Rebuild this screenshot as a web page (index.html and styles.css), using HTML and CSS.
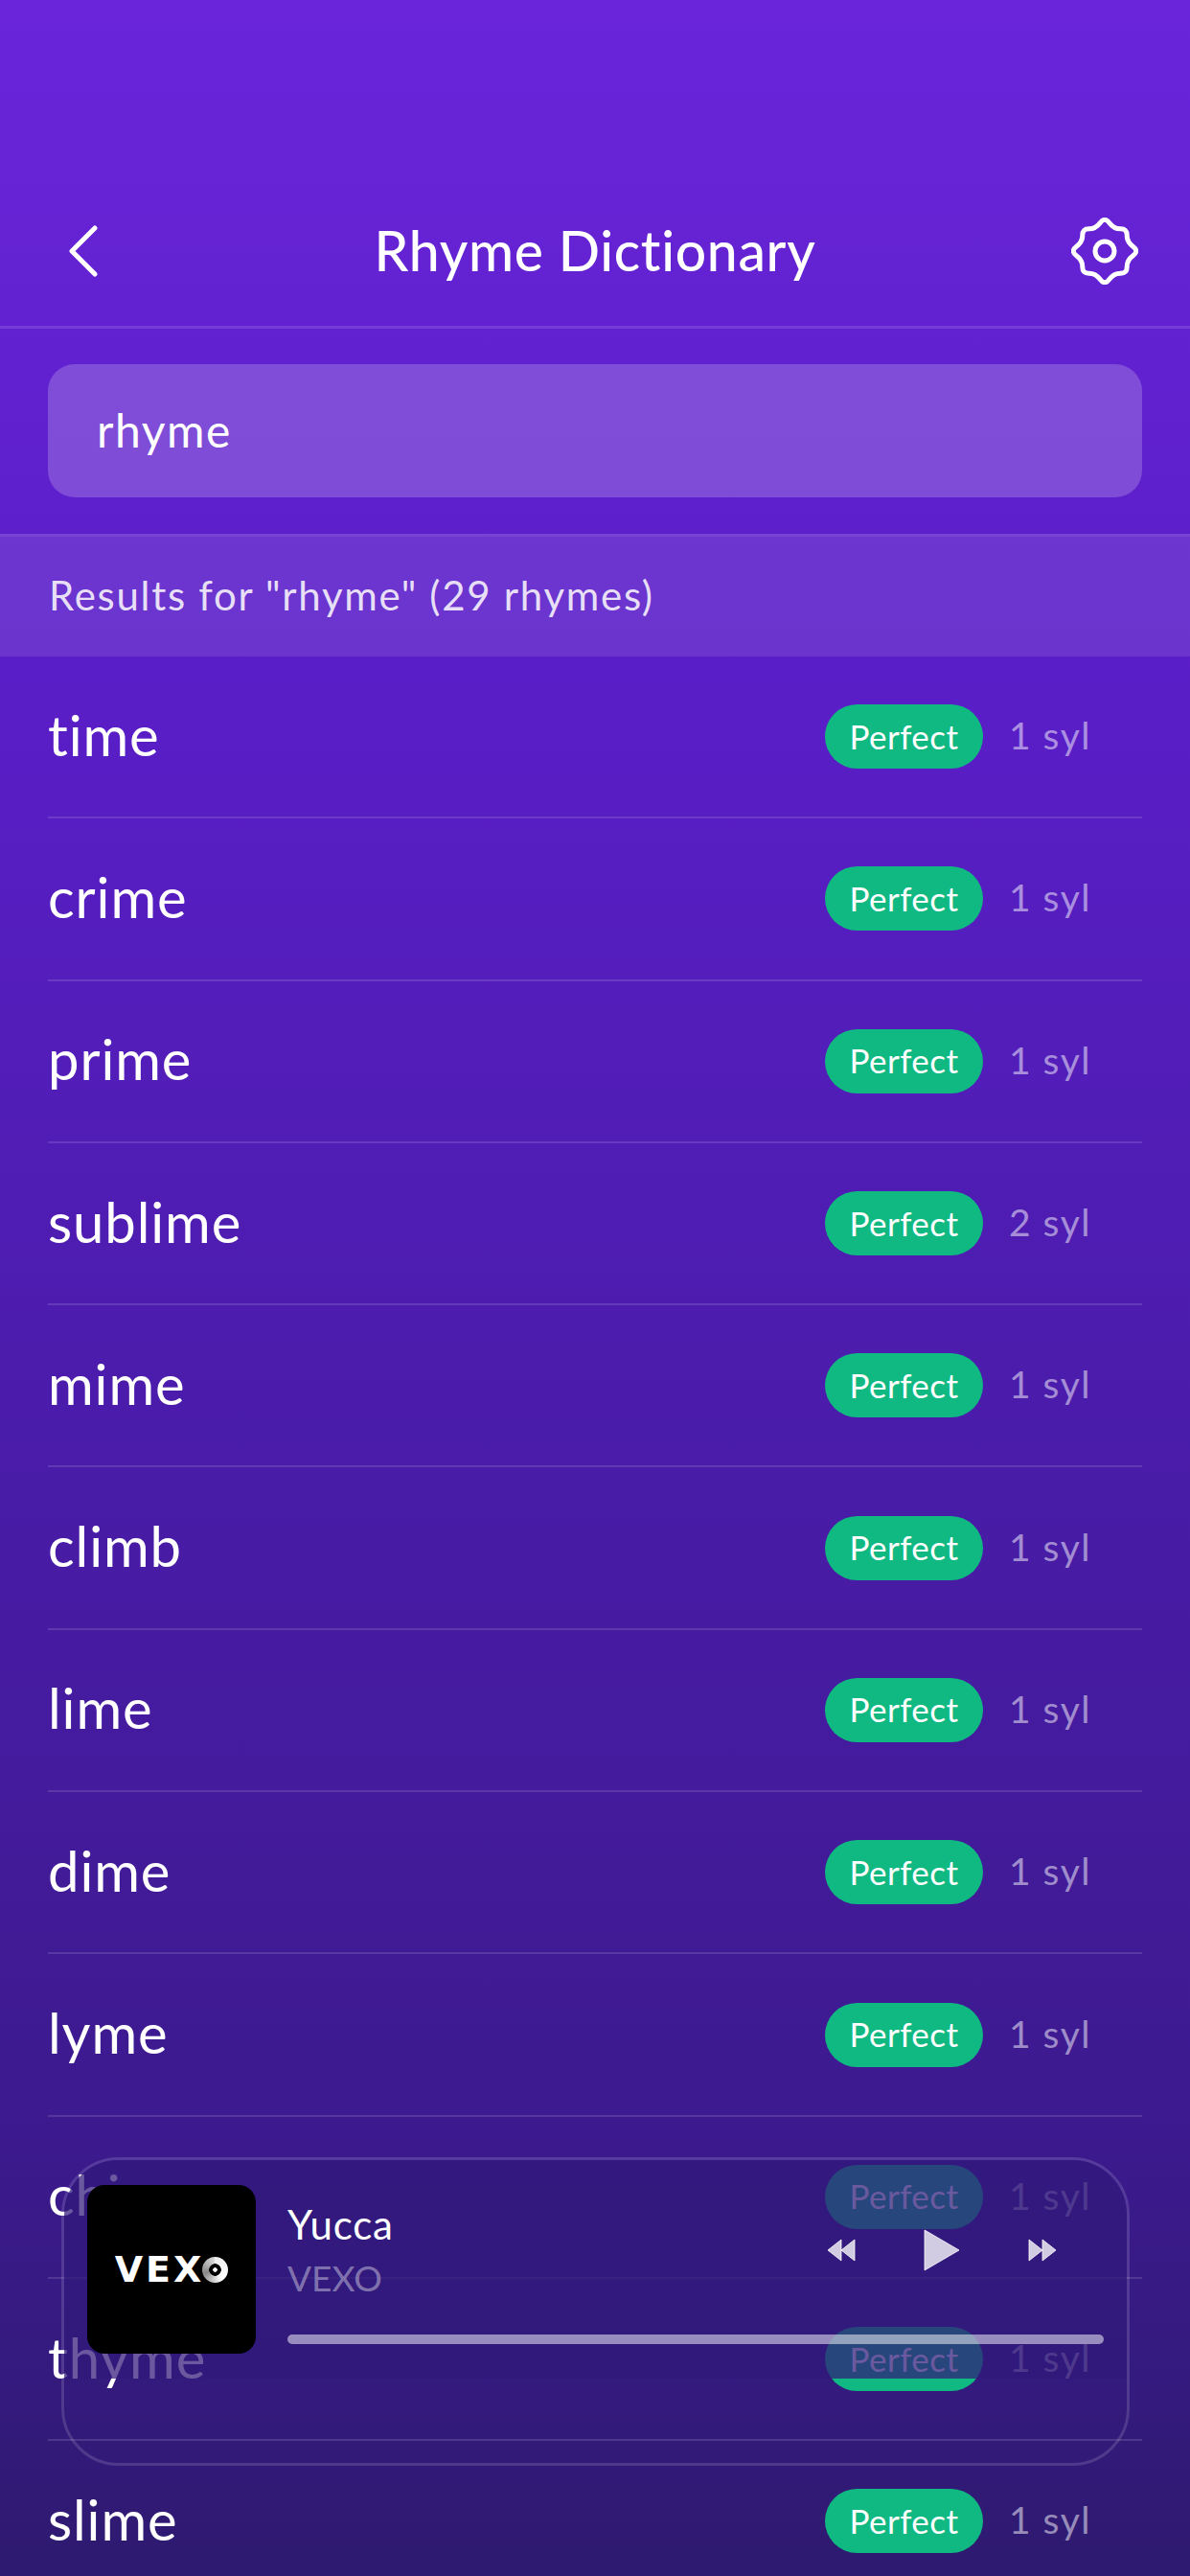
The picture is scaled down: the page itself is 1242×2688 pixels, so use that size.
FILE: index.html
```html
<!DOCTYPE html>
<html lang="en">
<head>
    <meta charset="UTF-8">
    <meta name="viewport" content="width=device-width, initial-scale=1.0">
    <title>Rhyme Dictionary</title>
    <link rel="stylesheet" href="styles.css">
</head>
<body>
    <div class="screen">
        <header class="topbar">
            <svg class="back" width="32" height="54" viewBox="0 0 32 54"><path d="M28 3 4 27l24 24" /></svg>
            <h1>Rhyme Dictionary</h1>
            <svg class="gear" width="70" height="70" viewBox="-35 -35 70 70">
                <path d="M-4.78 -29.55Q0 -36 4.78 -29.55Q9.57 -23.1 16.45 -23.2Q23.33 -23.33 23.2 -16.45Q23.1 -9.57 29.55 -4.78Q36 0 29.55 4.78Q23.1 9.57 23.2 16.45Q23.33 23.33 16.45 23.2Q9.57 23.1 4.78 29.55Q0 36 -4.78 29.55Q-9.57 23.1 -16.45 23.2Q-23.33 23.33 -23.2 16.45Q-23.1 9.57 -29.55 4.78Q-36 0 -29.55 -4.78Q-23.1 -9.57 -23.2 -16.45Q-23.33 -23.33 -16.45 -23.2Q-9.57 -23.1 -4.78 -29.55Z" />
                <circle r="10" />
            </svg>
        </header>

        <div class="search">
            <div class="search-box">rhyme</div>
        </div>

        <div class="results">Results for "rhyme" (29 rhymes)</div>

        <ul class="rhymes">
            <li class="rhyme"><span class="word">time</span><span class="tag">Perfect</span><span class="syl">1 syl</span></li>
            <li class="rhyme"><span class="word">crime</span><span class="tag">Perfect</span><span class="syl">1 syl</span></li>
            <li class="rhyme"><span class="word">prime</span><span class="tag">Perfect</span><span class="syl">1 syl</span></li>
            <li class="rhyme"><span class="word">sublime</span><span class="tag">Perfect</span><span class="syl">2 syl</span></li>
            <li class="rhyme"><span class="word">mime</span><span class="tag">Perfect</span><span class="syl">1 syl</span></li>
            <li class="rhyme"><span class="word">climb</span><span class="tag">Perfect</span><span class="syl">1 syl</span></li>
            <li class="rhyme"><span class="word">lime</span><span class="tag">Perfect</span><span class="syl">1 syl</span></li>
            <li class="rhyme"><span class="word">dime</span><span class="tag">Perfect</span><span class="syl">1 syl</span></li>
            <li class="rhyme"><span class="word">lyme</span><span class="tag">Perfect</span><span class="syl">1 syl</span></li>
            <li class="rhyme"><span class="word">chime</span><span class="tag">Perfect</span><span class="syl">1 syl</span></li>
            <li class="rhyme"><span class="word">thyme</span><span class="tag">Perfect</span><span class="syl">1 syl</span></li>
            <li class="rhyme"><span class="word">slime</span><span class="tag">Perfect</span><span class="syl">1 syl</span></li>
        </ul>

        <!-- Mini player, floats over the list -->
        <div class="player">
            <div class="player-main">
                <div class="cover">
                    <span class="cover-text">VEX</span><span class="cover-disc"></span>
                </div>
                <div class="track">
                    <div class="track-top">
                        <div class="track-names">
                            <div class="track-title">Yucca</div>
                            <div class="track-artist">VEXO</div>
                        </div>
                        <div class="controls">
                            <svg width="30" height="24" viewBox="0 0 30 24"><path d="M15 1v22L1 12zM29 1v22L15 12z" /></svg>
                            <svg width="40" height="46" viewBox="0 0 40 46"><path d="M2 2v42l36-21z" /></svg>
                            <svg width="30" height="24" viewBox="0 0 30 24"><path d="M1 1v22l14-11zM15 1v22l14-11z" /></svg>
                        </div>
                    </div>
                    <div class="progress"></div>
                </div>
            </div>
        </div>
    </div>
</body>
</html>
```

FILE: styles.css
```css
* { box-sizing: border-box; }

html, body { margin: 0; padding: 0; }

body { font-family: Lato, "Noto Sans", sans-serif; color: #fff; }

.screen {
    position: relative;
    width: 1242px;
    height: 2688px;
    overflow: hidden;
    background: linear-gradient(180deg, #6a25da 0%, #5a1ec8 26%, #3c1a8e 83%, #2e1a70 100%);
}

/* Header */
.topbar {
    height: 343px;
    padding: 227px 54px 0;
    display: grid;
    grid-template-columns: 1fr auto 1fr;
    align-items: start;
    border-bottom: 3px solid rgba(255, 255, 255, 0.12);
}

.topbar h1 {
    margin: 0;
    font-size: 57px;
    font-weight: 500;
    line-height: 68px;
    letter-spacing: 0.7px;
}

.back { margin: 8px 0 0 17px; fill: none; stroke: #fff; stroke-width: 5; stroke-linecap: round; stroke-linejoin: round; }
.gear { justify-self: end; fill: none; stroke: #fff; stroke-width: 5; }

/* Search */
.search { padding: 37px 50px 38px; }

.search-box {
    height: 139px;
    padding: 0 51px 3px;
    display: flex;
    align-items: center;
    border-radius: 28px;
    background: rgba(255, 255, 255, 0.2);
    font-size: 48px;
    letter-spacing: 1.5px;
}

.results {
    height: 128px;
    padding: 0 0 3px 51px;
    display: flex;
    align-items: center;
    border-top: 3px solid rgba(255, 255, 255, 0.07);
    background: rgba(255, 255, 255, 0.1);
    font-size: 42px;
    letter-spacing: 1.7px;
    color: rgba(255, 255, 255, 0.85);
}

/* List */
.rhymes { margin: 0; padding: 0 50px; list-style: none; }

.rhyme {
    height: 169.3px;
    display: flex;
    align-items: center;
    border-bottom: 2px solid rgba(255, 255, 255, 0.13);
}

.word { flex: 1; padding-bottom: 5px; font-size: 58px; letter-spacing: 0.9px; }

.tag {
    width: 165px;
    height: 67px;
    padding-bottom: 2px;
    display: flex;
    align-items: center;
    justify-content: center;
    border-radius: 34px;
    background: #10b981;
    font-size: 35px;
    letter-spacing: 0.5px;
}

.syl {
    width: 139px;
    margin-left: 27px;
    padding-bottom: 3px;
    font-size: 39px;
    letter-spacing: 1.5px;
    color: rgba(255, 255, 255, 0.5);
}

/* Player */
.player {
    position: absolute;
    left: 64px;
    top: 2251px;
    width: 1115px;
    height: 322px;
    border: 3px solid rgba(255, 255, 255, 0.14);
    border-radius: 60px;
}

.player-main {
    height: 228px;
    padding: 26px 24px 0;
    display: flex;
    gap: 33px;
    border-radius: 57px 57px 0 0;
    background: rgba(48, 25, 122, 0.72);
}

.cover {
    width: 176px;
    height: 176px;
    flex: none;
    display: flex;
    align-items: center;
    justify-content: center;
    border-radius: 18px;
    background: #000;
}

.cover-text {
    font-family: "DejaVu Sans", sans-serif;
    font-size: 38px;
    font-weight: 700;
    letter-spacing: 3px;
    line-height: 1;
}

.cover-disc {
    width: 27px;
    height: 27px;
    margin-left: -2px;
    border-radius: 50%;
    background: radial-gradient(circle, #fff 0 2px, #000 2.5px 6px, transparent 6.5px), conic-gradient(#eee, #fff 40%, #888 70%, #ddd);
}

.track { flex: 1; display: flex; flex-direction: column; }

.track-top { display: flex; justify-content: space-between; align-items: center; padding: 13px 49px 0 0; }

.track-title { font-size: 42px; line-height: 56px; letter-spacing: 0.8px; }

.track-artist { font-size: 37px; line-height: 56px; color: rgba(255, 255, 255, 0.4); }

.controls { display: flex; align-items: center; gap: 70px; margin-top: -2px; }

.controls svg { fill: rgba(255, 255, 255, 0.78); stroke: rgba(255, 255, 255, 0.78); stroke-width: 1; stroke-linejoin: round; }

.progress {
    height: 10px;
    margin-top: 31px;
    border-radius: 5px;
    background: rgba(255, 255, 255, 0.5);
}
```
